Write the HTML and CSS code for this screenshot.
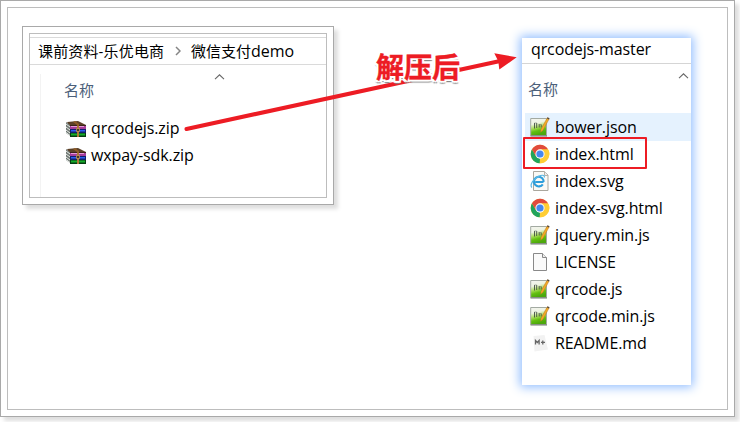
FILE: index.html
```
<!DOCTYPE html>
<html lang="zh-CN">
<head>
<meta charset="utf-8">
<title>qrcodejs</title>
<link rel="stylesheet" href="styles.css">
</head>
<body>
<svg class="defs" aria-hidden="true">
  <defs>
    <linearGradient id="green" x1="0" y1="0" x2="0.25" y2="1"><stop offset="0" stop-color="#f4f4f1"/><stop offset=".35" stop-color="#eef4e2"/><stop offset=".6" stop-color="#a4dc52"/><stop offset=".78" stop-color="#63c010"/><stop offset="1" stop-color="#4ca80c"/></linearGradient>
    <symbol id="zip" viewBox="0 0 20 16">
      <path d="M1 1 12 0l8 4v2H4z" fill="#5b4027"/>
      <path d="M0 1l4 3v11l-4-3z" fill="#6f7773"/>
      <path d="M0 3l4 3M0 6l4 3M0 9l4 3M0 11.500l4 3" stroke="#e8ede8" stroke-width="1"/>
      <path d="M4 4h16v1H4z" fill="#3b2418"/>
      <path d="M4 5h16v3H4z" fill="#a63d9b"/><path d="M5 5h13v1H5z" fill="#e59ada"/>
      <path d="M4 8h16v4H4z" fill="#10206e"/><path d="M5 9h14v1.500H5z" fill="#2c5cf0"/>
      <path d="M4 12h16v4H4z" fill="#063c12"/><path d="M5 12.500h14v2H5z" fill="#14ad2b"/>
      <path d="M9 0l4 3v13h-2V4L7 1z" fill="#8f5b25"/>
      <path d="M12 5v11" stroke="#d29a4a"/><path d="M10.500 7.500h3v3h-3z" fill="#4a3527" stroke="#cfa35a" stroke-width=".7"/>
    </symbol>
    <symbol id="note" viewBox="0 0 20 20">
      <path d="M.7 1.500H16.500V18.500H.7z" fill="url(#green)" stroke="#a3aaa2" stroke-width="1"/>
      <path d="M.5 19h16.500" stroke="#637061" stroke-width=".9"/>
      <path d="M4.500 6v5.500M6.700 6v5M9.200 7v3.500M11.200 7.500v3" stroke="#414d3f" stroke-width=".9"/><path d="M4.500 6h2.200M9.200 7.500h2" stroke="#7c8778" stroke-width=".7"/>
      <path d="M17.300.8l1.900 1L13 13.200l-2.300 2 .3-2.900z" fill="#f4aa27" stroke="#b67726" stroke-width=".5"/>
      <path d="M17.300.8l1.900 1" stroke="#51473c" stroke-width="1.300"/>
    </symbol>
    <symbol id="chrome" viewBox="0 0 20 20">
      <circle cx="10" cy="10" r="9.300" fill="#ffce35"/>
      <path d="M1.950 5.350 6 12.300 10 14.650 9.700 19.300A9.300 9.300 0 0 1 1.950 5.350z" fill="#20a45c"/>
      <path d="M10 5.350h8.050A9.300 9.300 0 0 1 9.700 19.300L14 12.300z" fill="#ffce35"/>
      <path d="M1.950 5.350A9.300 9.300 0 0 1 18.050 5.350H10L6 7.700v4.600z" fill="#e14b3d"/>
      <circle cx="10" cy="10" r="4.650" fill="#f5f7fa"/><circle cx="10" cy="10" r="3.600" fill="#4688ee"/>
    </symbol>
    <symbol id="ie" viewBox="0 0 20 20">
      <path d="M3.500.5h11l3.500 3.500v15.500H3.500z" fill="#faf9f5" stroke="#aaa79e"/>
      <path d="M14.500.5v4H18" fill="#eee" stroke="#b5b2a9"/>
      <path d="M13.500 11H5.300M12.800 13.300a4.800 4.800 0 1 1 .4-4.600q.4 1 .3 2.300" fill="none" stroke="#2e9edb" stroke-width="2.100"/>
      <path d="M2 16.500C-1 14.500 3.500 7 10.500 4.500q4.500-1 3.800 2" fill="none" stroke="#59b7e5" stroke-width="1.200"/>
    </symbol>
    <symbol id="blank" viewBox="0 0 20 20"><path d="M3.500 1.500h9l4 4v13h-13z" fill="#fafafa" stroke="#898989"/><path d="M12.500 1.500v4h4" fill="#eee" stroke="#898989"/></symbol>
    <symbol id="md" viewBox="0 0 20 20"><path d="M3.500 3 14.500 2l3.500 14.500L4.500 18.500z" fill="#f2f2f2"/><path d="M5.500 11.500v-4l1.800 2 1.800-2v4M12.800 7.500v4M11 9.300h4" fill="none" stroke="#666" stroke-width="1.300"/></symbol>
  </defs>
</svg>
<main class="frame page">
  <div class="frame-inner canvas">
    <section class="frame source">
      <div class="frame-inner explorer">
        <div class="crumbs"><span class="c1">课前资料-乐优电商</span><svg class="chev" viewBox="0 0 6 10"><path d="M1 1l4 4-4 4"/></svg><span class="c2">微信支付<span class="demo">demo</span></span></div>
        <div class="pane">
          <svg class="sort" viewBox="0 0 11 6"><path d="M1 5.200 5.500.8 10 5.200"/></svg>
          <div class="head">名称</div>
          <ul class="files">
            <li><svg class="zip"><use href="#zip"/></svg><span>qrcodejs.zip</span></li>
            <li><svg class="zip"><use href="#zip"/></svg><span>wxpay-sdk.zip</span></li>
          </ul>
        </div>
      </div>
    </section>
    <section class="result">
      <div class="title">qrcodejs-master</div>
      <svg class="sort" viewBox="0 0 11 6"><path d="M1 5.200 5.500.8 10 5.200"/></svg>
      <div class="head">名称</div>
      <ul class="files">
        <li class="hover"><svg class="ico"><use href="#note"/></svg><span>bower.json</span></li>
        <li><svg class="ico"><use href="#chrome"/></svg><span>index.html</span><i class="mark"></i></li>
        <li><svg class="ico"><use href="#ie"/></svg><span>index.svg</span></li>
        <li><svg class="ico"><use href="#chrome"/></svg><span>index-svg.html</span></li>
        <li><svg class="ico"><use href="#note"/></svg><span>jquery.min.js</span></li>
        <li><svg class="ico"><use href="#blank"/></svg><span>LICENSE</span></li>
        <li><svg class="ico"><use href="#note"/></svg><span>qrcode.js</span></li>
        <li><svg class="ico"><use href="#note"/></svg><span>qrcode.min.js</span></li>
        <li><svg class="ico"><use href="#md"/></svg><span>README.md</span></li>
      </ul>
    </section>
  </div>
</main>
<svg class="arrow" viewBox="0 0 740 422"><path d="M186.500 129 499 61.200" stroke="#ed1c24" stroke-width="4" stroke-linecap="round"/><path d="M516.700 57.300 494.300 53.300 498.300 61.300 499.300 69.500z" fill="#ed1c24"/></svg>
<div class="callout">解压后</div>
</body>
</html>
```
FILE: styles.css
```
* { box-sizing: border-box; }
body { margin: 0; width: 740px; height: 422px; overflow: hidden; background: #fff; color: #000; font: 16px/27px "Open Sans", "Noto Sans CJK SC", sans-serif; }
.defs { position: absolute; width: 0; height: 0; }
svg { display: block; flex: none; }
ul { list-style: none; margin: 0; padding: 0; }
.frame { border: 1px solid #a9a9a9; padding: 6px; background: #fff; box-shadow: 4px 4px 4px #dedede; }
.frame-inner { border: 1px solid #bdbdbd; height: 100%; }
.page { width: 735px; height: 417px; }
.canvas { display: flex; justify-content: space-between; align-items: flex-start; padding: 18px 36px 0 14px; }
.source { width: 312px; height: 179px; }
.explorer { padding-top: 3px; }
.crumbs { display: flex; align-items: center; height: 28px; border: solid #dadada; border-width: 1px 0; padding-left: 8px; font-size: 15px; white-space: nowrap; }
.c1 { width: 126px; letter-spacing: .15px; }
.chev { width: 6px; height: 10px; margin: 0 10px 0 11px; }
.chev path { fill: none; stroke: #858585; stroke-width: 1.5; }
.demo { font-size: 16px; }
.pane { margin: 9px 0 0 10px; height: 123px; border-left: 1px solid #f3f3f3; }
.sort { width: 11px; height: 6px; fill: none; stroke: #666; stroke-width: 1.1; }
.source .sort { margin-left: 173px; }
.head { color: #4c607a; font-size: 15px; line-height: 20px; }
.source .head { margin-left: 23px; }
.files li { display: flex; align-items: center; height: 27px; position: relative; white-space: nowrap; letter-spacing: -.1px; }
.source .files { margin: 15px 0 0 25px; }
.zip { width: 20px; height: 16px; margin-right: 5px; }
.result { width: 169px; height: 347px; margin-top: 12px; background: #fff; box-shadow: 0 0 10px 2px #8fbcff; }
.title { height: 26px; padding-left: 9px; line-height: 23px; letter-spacing: -.12px; border-bottom: 1px solid #d5d5d5; }
.result .sort { margin: 9px 0 0 156px; }
.result .head { margin: 0 0 0 6px; }
.result .files { margin: 14px 0 0 3px; }
.result li { padding-left: 5px; }
.result .files .hover { height: 28px; padding-top: 1px; }
.hover .ico { margin-top: -2px; }
.hover { background: #e5f2fe; }
.ico { width: 20px; height: 20px; margin: -1px 5px 0 0; }
.mark { position: absolute; left: -2px; top: -4px; width: 124px; height: 32px; border: 2px solid #ed1c24; border-radius: 1px; }
.arrow { position: absolute; left: 0; top: 0; width: 740px; height: 422px; fill: none; pointer-events: none; }
.callout { position: absolute; left: 376px; top: 47px; font: bold 28px/38px "Noto Sans CJK SC", sans-serif; color: #ed1c24; white-space: nowrap; -webkit-text-stroke: .4px #ed1c24; text-shadow: -2px 0 #fff, 2px 0 #fff, 0 -2px #fff, 0 2px #fff, -2px -2px #fff, 2px 2px #fff, -2px 2px #fff, 2px -2px #fff, -1px 3px 1px #888, 1px 3px 1px #888; }
```
